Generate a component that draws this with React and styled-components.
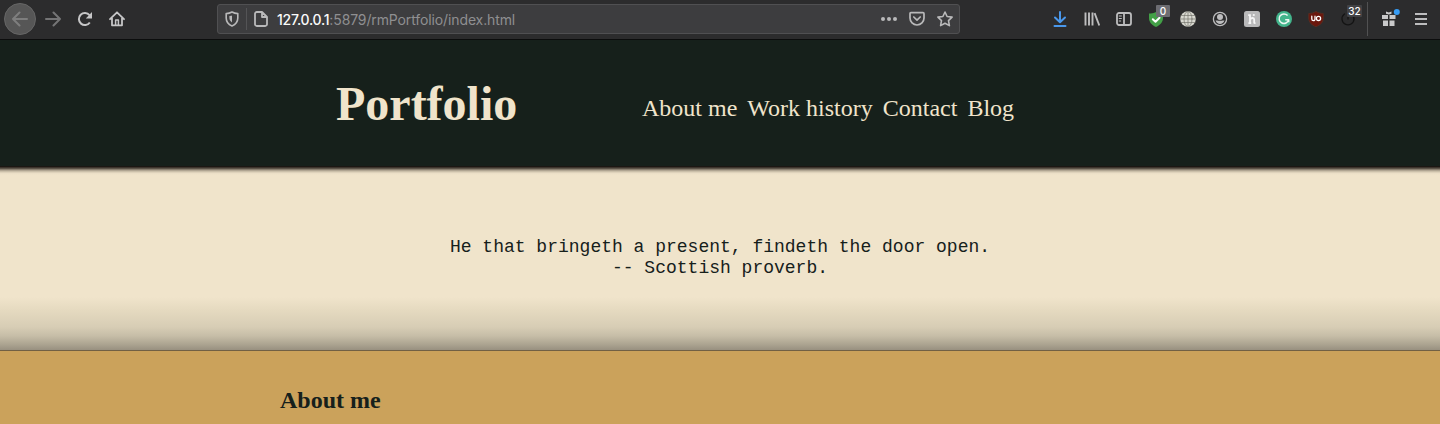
import React from "react";
import styled, { createGlobalStyle } from "styled-components";

const Global = createGlobalStyle`
  * { box-sizing: border-box; }
  body { margin: 0; background: #cba25b; overflow: hidden; }
`;

const Page = styled.div`
  width: 1440px;
  height: 424px;
  overflow: hidden;
  background: #cba25b;
  color: #16201b;
  font-family: "Liberation Serif", serif;
`;

const Toolbar = styled.div`
  display: flex;
  align-items: center;
  height: 40px;
  padding: 0 3px 2px 4px;
  background: #2c2c2d;
  border-bottom: 1px solid #0c0d0d;
  font-family: Inter, sans-serif;
`;

const BackButton = styled.div`
  display: flex;
  align-items: center;
  justify-content: center;
  width: 32px;
  height: 32px;
  margin-right: 1px;
  border-radius: 50%;
  background: #565656;
  border: 1px solid #666;
  color: #7e7e7e;
`;

const NavIcon = styled.div`
  display: flex;
  width: 32px;
  justify-content: center;
  color: ${(p) => p.$color || "#c6c6c7"};
`;

const UrlBar = styled.div`
  display: flex;
  align-items: center;
  width: 743px;
  height: 30px;
  margin-left: 84px;
  padding: 0 6px;
  border: 1px solid #505052;
  border-radius: 3px;
  background: #3d3d3f;
  color: #b9b9ba;
`;

const UrlDivider = styled.div`
  width: 1px;
  height: 22px;
  margin: 0 6px;
  background: #545456;
`;

const Url = styled.div`
  flex: 1;
  margin-left: 8px;
  padding-top: 2px;
  font-size: 14px;
  line-height: 20px;
  letter-spacing: -0.12px;
  color: #8f8f91;
  white-space: nowrap;
`;

const Host = styled.span`
  color: #fafafa;
  font-weight: 500;
  letter-spacing: -0.25px;
`;

const UrlActions = styled.div`
  display: flex;
  gap: 12px;
`;

const Extensions = styled.div`
  display: flex;
  align-items: center;
  margin-left: auto;
  color: #bdbdbe;
`;

const Extension = styled.div`
  position: relative;
  display: flex;
  justify-content: center;
  width: 32px;
`;

const Badge = styled.div`
  position: absolute;
  top: -6px;
  left: ${(p) => p.$left}px;
  width: ${(p) => p.$width}px;
  height: 12px;
  border-radius: 1px;
  background: ${(p) => p.$bg};
  color: #fff;
  font: 500 10px/13px Inter, sans-serif;
  text-align: center;
`;

const ToolbarDivider = styled.div`
  width: 1px;
  height: 34px;
  margin: 0 5px 0 3px;
  background: #515152;
`;

const Header = styled.header`
  display: flex;
  align-items: center;
  height: 127px;
  padding-left: 336px;
  background: linear-gradient(#16201b 126px, #1b1713 126px);
  color: #f0e4cb;
`;

const Brand = styled.h1`
  width: 306px;
  margin: 0;
  font-size: 48px;
  line-height: 55px;
`;

const Nav = styled.nav`
  display: flex;
  gap: 10px;
  padding-top: 9px;
  font-size: 24px;
  line-height: 28px;
  white-space: nowrap;
`;

const Hero = styled.section`
  height: 183px;
  padding-top: 70px;
  background: linear-gradient(
    #2d2620 0, #5c5348 1.5px, #897f70 2.5px, #afa491 3.5px,
    #cabfa9 4.5px, #ded2bb 5.5px, #ebdfc7 6.5px, #f0e4cb 8px,
    #f0e4cb 130px, #e5dac0 143px, #d7cdb5 160px,
    #c6bda7 169px, #aaa28f 178px, #989080 183px
  );
`;

const Quote = styled.p`
  margin: 0;
  font: 18px/21px "Courier New", "Liberation Mono", monospace;
  text-align: center;
`;

const About = styled.section`
  height: 74px;
  padding: 35px 280px 0;
  border-top: 1px solid #716044;
  background: #cba25b;
`;

const AboutTitle = styled.h2`
  margin: 0;
  font-size: 24px;
  line-height: 28px;
`;

const Icon = ({ children, size = 16, width = 2, ...rest }) => (
  <svg width={size} height={size} viewBox="0 0 16 16" fill="none" stroke="currentColor"
    strokeWidth={width} strokeLinecap="round" strokeLinejoin="round" {...rest}>
    {children}
  </svg>
);

const shieldOutline = "M8 1C10 2.2 12 2.6 13.8 2.6V7C13.8 11 11.5 13.5 8 15C4.5 13.5 2.2 11 2.2 7V2.6C4 2.6 6 2.2 8 1Z";

export default function App() {
  return (
    <Page>
      <Global />
      <Toolbar>
        <BackButton>
          <Icon><path d="M15 8H1M7.5 1.5L1 8l6.5 6.5" /></Icon>
        </BackButton>
        <NavIcon $color="#747475">
          <Icon><path d="M1 8h14M8.5 1.5L15 8l-6.5 6.5" /></Icon>
        </NavIcon>
        <NavIcon>
          <Icon>
            <path d="M12.8 11.5A6 6 0 1 1 12.5 4.2" strokeLinecap="butt" />
            <path d="M15 1v6.4H8.8z" fill="currentColor" stroke="none" />
          </Icon>
        </NavIcon>
        <NavIcon>
          <Icon width={1.8}>
            <path d="M1 8.2L8 1.3l7 6.9M3 7v7.3h10V7" />
            <path d="M6.6 14V9h2.8v5" strokeWidth="1.5" />
          </Icon>
        </NavIcon>

        <UrlBar>
          <Icon width={1.6}>
            <path d={shieldOutline} />
            <path d="M8 4.5v7C6 10 5.4 8.8 5.4 6.8V4.9C6.5 4.9 7 4.8 8 4.5Z" fill="currentColor" stroke="none" />
          </Icon>
          <UrlDivider />
          <Icon width={1.8}><path d="M3.8 1H9l5 5v7.2a1.8 1.8 0 0 1-1.8 1.8H3.8A1.8 1.8 0 0 1 2 13.2V2.8A1.8 1.8 0 0 1 3.8 1M9 1v5h5" /></Icon>
          <Url><Host>127.0.0.1</Host>:5879/rmPortfolio/index.html</Url>
          <UrlActions>
            <Icon>
              <g fill="currentColor" stroke="none">
                <circle cx="2" cy="8" r="2" /><circle cx="8" cy="8" r="2" /><circle cx="14" cy="8" r="2" />
              </g>
            </Icon>
            <Icon width={1.7}>
              <path d="M2 1.7h12q1 0 1 1V7A7 7 0 0 1 1 7V2.7q0-1 1-1z" />
              <path d="M4.8 6L8 9.1 11.2 6" />
            </Icon>
            <Icon width={1.6}>
              <path d="M8 1l2.1 4.5 5 .6-3.6 3.5.9 5L8 12.2l-4.4 2.4.9-5L.9 6.1l5-.6z" />
            </Icon>
          </UrlActions>
        </UrlBar>

        <Extensions>
          <Extension>
            <Icon color="#4a98ec"><path d="M8 1v10M3 6.5L8 11.3l5-4.8M2.5 15h11" /></Icon>
          </Extension>
          <Extension>
            <Icon width={1.9} strokeLinecap="butt"><path d="M1.5 1.5v13M5 1.5v13M8.5 1.5v13" /><path d="M10.6 2.2l4.7 12.3" /></Icon>
          </Extension>
          <Extension>
            <Icon width={1.8}>
              <rect x="1" y="2" width="14" height="12" rx="2" />
              <path d="M8 2v12" /><path d="M3.2 5h2.2M3.2 7.5h2.2M3.2 10h1.5" strokeWidth="1" />
            </Icon>
          </Extension>
          <Extension>
            <Icon>
              <path d="M8 1C10 2 13 2.5 15 2.5V7c0 4-2.5 7-7 9C3.5 14 1 11 1 7V2.5C3 2.5 6 2 8 1Z" fill="#43a047" stroke="none" />
              <path d="M4.8 8.2l2.7 2.6 4-4" stroke="#fff" />
            </Icon>
            <Badge $left={16} $width={14} $bg="#6d6d72">0</Badge>
          </Extension>
          <Extension>
            <Icon width={0.7}>
              <circle cx="8" cy="8" r="7.8" fill="#d8d8d0" stroke="none" />
              <g stroke="#77776f">
                <path d="M1 4.5h14M.5 8h15M1 11.5h14M8 .5v15" />
                <ellipse cx="8" cy="8" rx="4" ry="7.5" />
              </g>
            </Icon>
          </Extension>
          <Extension>
            <Icon width={1.3}>
              <circle cx="8" cy="8" r="6.6" />
              <circle cx="8" cy="6" r="3" fill="currentColor" stroke="none" />
              <path d="M3.5 9.6C5 9 6 9.8 8 9.8s3-.8 4.5-.2C11.7 12 10 13 8 13s-3.7-1-4.5-3.4z" fill="currentColor" stroke="none" />
            </Icon>
          </Extension>
          <Extension>
            <Icon width={1.8}>
              <rect width="16" height="16" rx="2.5" fill="#b9b9ba" stroke="none" />
              <path d="M6 3.2v9.3M6 8.4c1.6-1.9 4.2-1.9 4.2.3v3.8M4.2 4.2H6M4.4 12.1h2.8M10.2 12.1h1.3" stroke="#f5f5f5" strokeLinecap="butt" />
              <circle cx="9.8" cy="4" r="1.1" fill="#f5f5f5" stroke="none" />
            </Icon>
          </Extension>
          <Extension>
            <Icon width={1.5}>
              <circle cx="8" cy="8" r="8" fill="#43b58c" stroke="none" />
              <path d="M11.6 4.6a4.8 4.8 0 1 0 1 4.2H9.2M12.7 8.8v2.5" stroke="#edf7f2" strokeLinecap="butt" />
            </Icon>
          </Extension>
          <Extension>
            <Icon width={1.3}>
              <path d="M8 .5C10 1.8 12.5 2.3 15.3 2.5V7c0 4.5-3 7-7.3 8.8C3.7 14 .7 11.5.7 7V2.5C3.5 2.3 6 1.8 8 .5Z" fill="#6b170d" stroke="#573023" strokeWidth=".8" />
              <path d="M3.8 5.2v2.9q0 1.6 1.6 1.6t1.6-1.6V5.2" stroke="#fff" />
              <circle cx="10.5" cy="7.5" r="2.1" stroke="#fff" />
            </Icon>
          </Extension>
          <Extension>
            <Icon color="#141414" width={1.3}>
              <path d="M4.5 3A6 6 0 1 0 14 8 6 6 0 0 0 10.8 2.8M8 5v3" />
            </Icon>
            <Badge $left={15} $width={15} $bg="#424244">32</Badge>
          </Extension>
          <ToolbarDivider />
          <Extension>
            <Icon overflow="visible">
              <g fill="#c9c9ca" stroke="none">
                <path d="M1 4h6v4H1zM8.5 4h6v4h-6zM2 9.5h5V15H2zM8.5 9.5h5V15h-5zM5 .5l2.8 1L10.5.5v2.3L8 3.5l-3-.8z" />
              </g>
              <circle cx="15.8" cy="1" r="3" fill="#379df5" stroke="none" />
            </Icon>
          </Extension>
          <Extension>
            <Icon strokeLinecap="butt"><path d="M2 3h12M2 8h12M2 13h12" /></Icon>
          </Extension>
        </Extensions>
      </Toolbar>

      <Header>
        <Brand>Portfolio</Brand>
        <Nav><span>About me</span><span>Work history</span><span>Contact</span><span>Blog</span></Nav>
      </Header>
      <Hero>
        <Quote>He that bringeth a present, findeth the door open.<br />-- Scottish proverb.</Quote>
      </Hero>
      <About><AboutTitle>About me</AboutTitle></About>
    </Page>
  );
}
